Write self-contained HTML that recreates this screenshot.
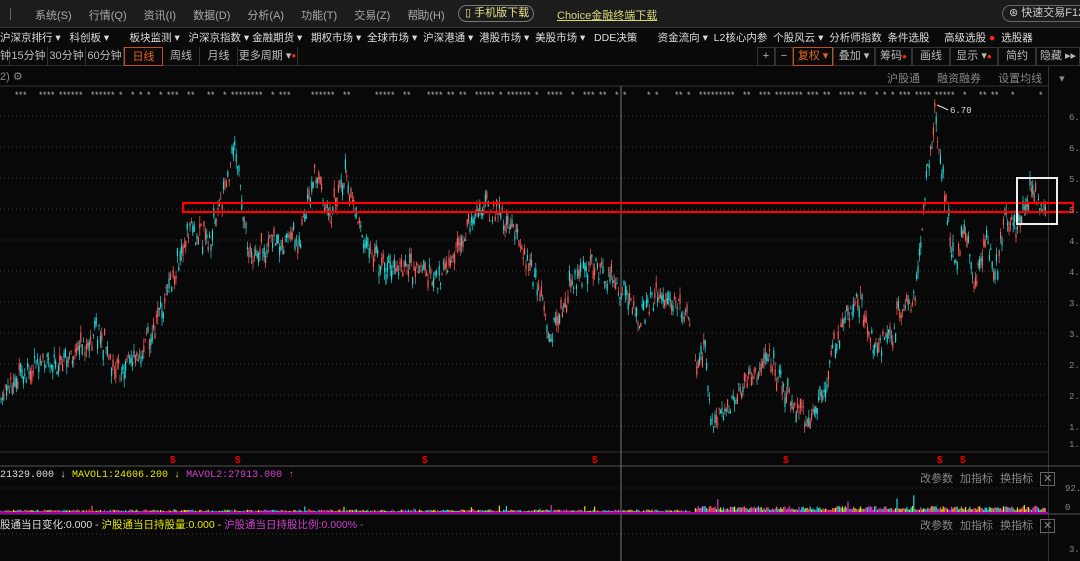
<!DOCTYPE html>
<html><head><meta charset="utf-8"><style>
*{margin:0;padding:0;box-sizing:border-box}
body{width:1080px;height:561px;background:#080808;overflow:hidden;position:relative;font-family:"Liberation Sans","Noto Sans CJK SC",sans-serif;font-size:11px;color:#c8c8c8}
.abs{position:absolute;white-space:nowrap}
#top{left:0;top:0;width:1080px;height:28px;background:#1c1c1c;border-bottom:1px solid #333}
#menu{left:0;top:28px;width:1080px;height:18px;background:#0a0a0a}
#tabs{left:0;top:46px;width:1080px;height:20px;background:#0a0a0a;border-bottom:1px solid #2a2a2a}
.tab{position:absolute;top:1px;height:19px;border-right:1px solid #333;line-height:18px;text-align:center;color:#bbb}
.btn{position:absolute;top:1px;height:19px;border:1px solid #333;line-height:17px;text-align:center;color:#bbb}
</style></head><body>
<div class="abs" id="top">
 <div class="abs" style="left:10px;top:8px;width:1px;height:12px;background:#666"></div>
 <div class="abs" style="left:35px;top:7px;color:#aaa;word-spacing:14px">系统(S) 行情(Q) 资讯(I) 数据(D) 分析(A) 功能(T) 交易(Z) 帮助(H)</div>
 <div class="abs" style="left:418px;top:8px;width:1px;height:12px;background:#666"></div>
 <div class="abs" style="left:458px;top:5px;width:76px;height:17px;border:1px solid #777;border-radius:9px;color:#e6e08a;line-height:15px;padding-left:6px">▯ 手机版下载</div>
 <div class="abs" style="left:557px;top:7px;color:#d8d57a;text-decoration:underline">Choice金融终端下载</div>
 <div class="abs" style="left:1002px;top:5px;width:90px;height:17px;border:1px solid #666;border-radius:9px;color:#ccc;line-height:15px;padding-left:6px">⊛ 快速交易F12</div>
</div>
<div class="abs" id="menu"><div class="abs" style="left:0;top:2px;color:#ddd;font-size:10.5px">沪深京排行 ▾&nbsp;&nbsp;&nbsp;科创板 ▾&nbsp;&nbsp;&nbsp;&nbsp;&nbsp;&nbsp;&nbsp;板块监测 ▾&nbsp;&nbsp;&nbsp;沪深京指数 ▾ 金融期货 ▾&nbsp;&nbsp;&nbsp;期权市场 ▾&nbsp;&nbsp;全球市场 ▾&nbsp;&nbsp;沪深港通 ▾&nbsp;&nbsp;港股市场 ▾&nbsp;&nbsp;美股市场 ▾&nbsp;&nbsp;&nbsp;DDE决策&nbsp;&nbsp;&nbsp;&nbsp;&nbsp;&nbsp;&nbsp;资金流向 ▾&nbsp;&nbsp;L2核心内参&nbsp;&nbsp;个股风云 ▾&nbsp;&nbsp;分析师指数&nbsp;&nbsp;条件选股&nbsp;&nbsp;&nbsp;&nbsp;&nbsp;高级选股 <span style="color:#f22">●</span>&nbsp;&nbsp;选股器</div></div>
<div class="abs" id="tabs">
 <div class="tab" style="left:0;width:10px">钟</div>
 <div class="tab" style="left:10px;width:38px">15分钟</div>
 <div class="tab" style="left:48px;width:38px">30分钟</div>
 <div class="tab" style="left:86px;width:38px">60分钟</div>
 <div class="tab" style="left:124px;width:39px;border:1px solid #c3501a;color:#e8641e">日线</div>
 <div class="tab" style="left:163px;width:37px">周线</div>
 <div class="tab" style="left:200px;width:38px">月线</div>
 <div class="tab" style="left:238px;width:60px">更多周期 ▾<span style="color:#f22;font-size:8px;vertical-align:top">●</span></div>
 <div class="btn" style="left:757px;width:18px">+</div>
 <div class="btn" style="left:775px;width:18px">−</div>
 <div class="btn" style="left:793px;width:40px;border-color:#c3501a;color:#e8641e">复权 ▾</div>
 <div class="btn" style="left:833px;width:42px">叠加 ▾</div>
 <div class="btn" style="left:875px;width:37px">筹码<span style="color:#f22;font-size:8px;vertical-align:top">●</span></div>
 <div class="btn" style="left:912px;width:38px">画线</div>
 <div class="btn" style="left:950px;width:48px">显示 ▾<span style="color:#f22;font-size:8px;vertical-align:top">●</span></div>
 <div class="btn" style="left:998px;width:38px">简约</div>
 <div class="btn" style="left:1036px;width:44px">隐藏 ▸▸</div>
</div>
<div class="abs" style="left:0;top:70px;color:#888">2) ⚙</div>
<div class="abs" style="left:887px;top:70px;color:#888;word-spacing:14px">沪股通 融资融券 设置均线 ▾</div>
<div class="abs" style="left:1048px;top:66px;width:1px;height:495px;background:#333"></div>
<svg class="abs" style="left:0;top:0" width="1080" height="561" id="sv">
 <g stroke="#3a3a3a" stroke-dasharray="1,3">
  <line x1="0" y1="116" x2="1048" y2="116"/><line x1="0" y1="147" x2="1048" y2="147"/><line x1="0" y1="178" x2="1048" y2="178"/><line x1="0" y1="209" x2="1048" y2="209"/><line x1="0" y1="240" x2="1048" y2="240"/><line x1="0" y1="271" x2="1048" y2="271"/><line x1="0" y1="302" x2="1048" y2="302"/><line x1="0" y1="333" x2="1048" y2="333"/><line x1="0" y1="364" x2="1048" y2="364"/><line x1="0" y1="395" x2="1048" y2="395"/><line x1="0" y1="426" x2="1048" y2="426"/>
  <line x1="0" y1="488" x2="1048" y2="488"/><line x1="0" y1="534" x2="1048" y2="534"/>
 </g>
 <line x1="0" y1="86" x2="1048" y2="86" stroke="#333"/>
 <line x1="0" y1="452" x2="1048" y2="452" stroke="#333"/>
 <line x1="0" y1="466" x2="1080" y2="466" stroke="#555"/>
 <line x1="0" y1="514" x2="1080" y2="514" stroke="#555"/>
 <line x1="621" y1="86" x2="621" y2="561" stroke="#777"/>
 <g id="c"></g>
 <rect x="183" y="203" width="890" height="9" fill="none" stroke="#f00" stroke-width="2.2"/>
 <rect x="1017" y="178" width="40" height="46" fill="none" stroke="#eee" stroke-width="2"/>
 <polyline points="937,105 944,108 948,110" stroke="#ddd" fill="none"/>
 <text x="950" y="113" fill="#ddd" font-size="9" font-family="Liberation Mono">6.70</text>
 <g fill="#e00" font-size="10" font-weight="bold" font-family="Liberation Sans"><text x="170" y="463">$</text><text x="235" y="463">$</text><text x="422" y="463">$</text><text x="592" y="463">$</text><text x="783" y="463">$</text><text x="937" y="463">$</text><text x="960" y="463">$</text></g>
 <rect x="0" y="512" width="1048" height="2" fill="#a000a0"/>
 <g fill="#888" font-size="9" font-family="Liberation Mono"><text x="1069" y="120">6.</text><text x="1069" y="151">6.</text><text x="1069" y="182">5.</text><text x="1069" y="213">5.</text><text x="1069" y="244">4.</text><text x="1069" y="275">4.</text><text x="1069" y="306">3.</text><text x="1069" y="337">3.</text><text x="1069" y="368">2.</text><text x="1069" y="399">2.</text><text x="1069" y="430">1.</text><text x="1069" y="447">1.</text><text x="1065" y="491">92.</text><text x="1065" y="510">0</text><text x="1069" y="552">3.</text></g>
</svg>
<div class="abs" style="left:0;top:470px;font-family:'Liberation Mono','Noto Sans CJK SC',monospace;font-size:10px;color:#ddd">21329.000 ↓ <span style="color:#e6e600">MAVOL1:24606.200 ↓</span> <span style="color:#d040d0">MAVOL2:27913.000 ↑</span></div>
<div class="abs" style="left:920px;top:470px;color:#888;word-spacing:4px">改参数 加指标 换指标 <span style="border:1px solid #666;padding:0 2px">✕</span></div>
<div class="abs" style="left:0;top:517px;font-size:10.5px;color:#ddd">股通当日变化:0.000 - <span style="color:#e6e600">沪股通当日持股量:0.000 -</span> <span style="color:#d040d0">沪股通当日持股比例:0.000% -</span></div>
<div class="abs" style="left:920px;top:517px;color:#888;word-spacing:4px">改参数 加指标 换指标 <span style="border:1px solid #666;padding:0 2px">✕</span></div>
<script>
var K=[[0,400],[20,380],[45,360],[60,372],[100,330],[115,375],[150,340],[165,300],[190,230],[210,240],[235,150],[250,260],[275,240],[300,240],[315,165],[330,220],[345,175],[360,230],[380,265],[420,272],[440,280],[480,205],[500,215],[520,240],[540,300],[550,335],[570,290],[590,262],[605,272],[620,290],[640,320],[660,292],[690,320],[694,370],[705,350],[712,425],[740,390],[770,360],[790,400],[810,420],[825,380],[840,330],[860,300],[875,350],[890,340],[900,310],[915,300],[925,200],[935,110],[945,200],[955,270],[965,220],[975,295],[985,230],[995,280],[1005,210],[1020,230],[1030,190],[1045,210]];
var s=7;function r(){s=(s*9301+49297)%233280;return s/233280}
function P(x){for(var i=0;i<K.length-1;i++)if(x>=K[i][0]&&x<=K[i+1][0]){var t=(x-K[i][0])/(K[i+1][0]-K[i][0]);return K[i][1]+t*(K[i+1][1]-K[i][1])}return 210}
var h='',v='',stars='';
for(var x=1;x<1046;x+=1.4){if(x>691&&x<694)continue;var y=P(x)+(r()-.5)*22,o=y+(r()-.5)*20,up=r()>.5,c=up?'#ff5a5a':'#20d8d8';var t=Math.min(y,o),b=Math.max(y,o);h+='<line x1="'+x+'" y1="'+(t-r()*8)+'" x2="'+x+'" y2="'+(b+r()*8)+'" stroke="'+c+'" stroke-width="0.7"/><rect x="'+(x-0.6)+'" y="'+t+'" width="1.2" height="'+Math.max(1,b-t)+'" fill="'+c+'"/>';
var vh=(x>690?2+r()*4:0.5+r()*2)*(r()>.97?3:1);v+='<rect x="'+(x-.6)+'" y="'+(512-vh)+'" width="1.2" height="'+vh+'" fill="'+['#ff5a5a','#20d8d8','#e0e000','#d040d0'][Math.floor(r()*4)]+'"/>';}
for(var x=15;x<1040;x+=4){if(r()>.4)stars+='<text x="'+x+'" y="98" fill="#bbb" font-size="9">*</text>';}
document.getElementById('c').innerHTML=h+v+stars;
</script>
</body></html>
